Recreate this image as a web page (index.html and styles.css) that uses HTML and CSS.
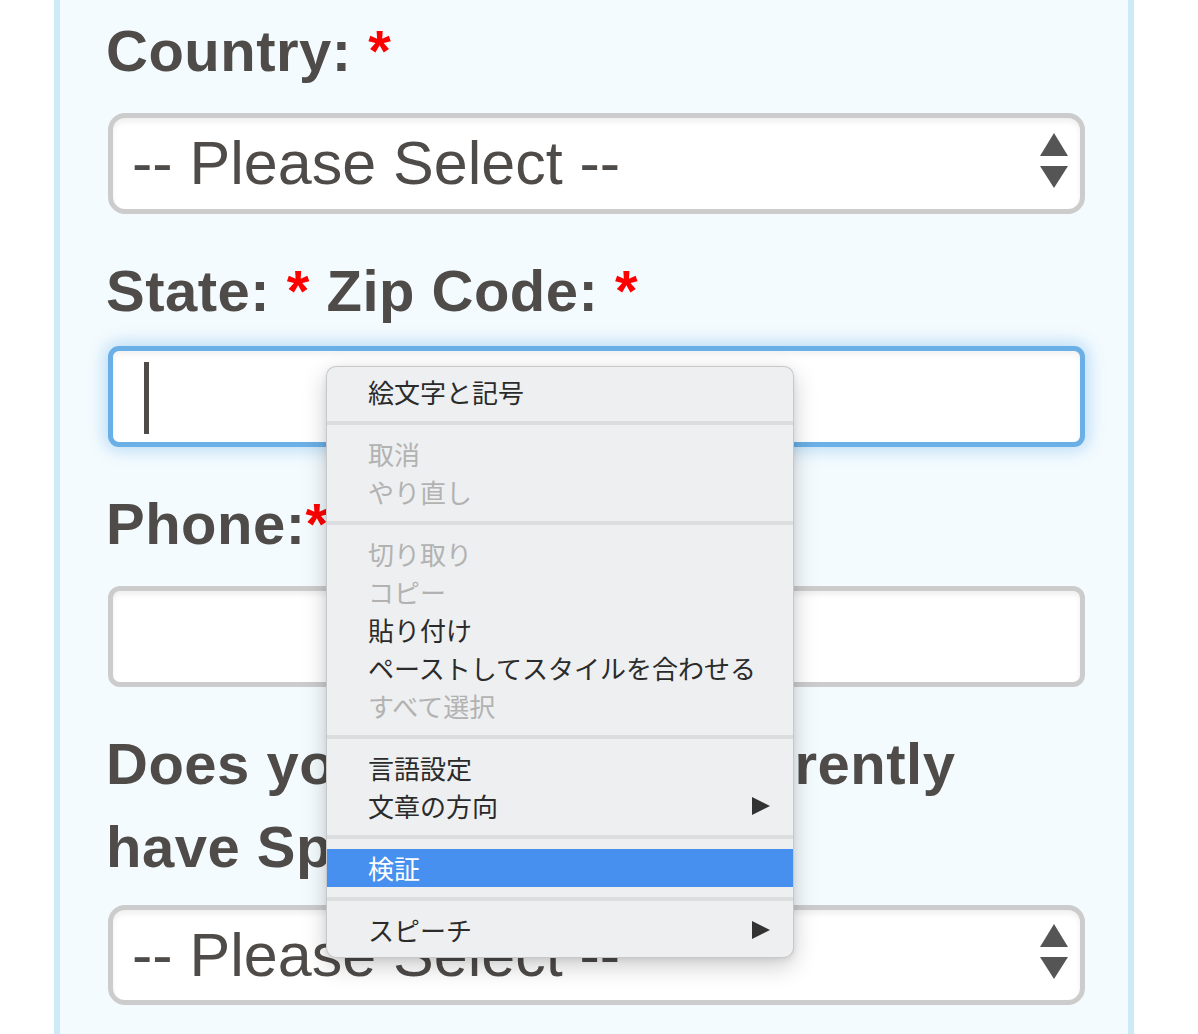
FILE: index.html
```html
<!DOCTYPE html>
<html lang="en">
<head>
<meta charset="utf-8">
<title>Service Form</title>
<link rel="stylesheet" href="styles.css">
</head>
<body>
<main class="panel">
  <form class="form">
    <div class="field">
      <div class="label">Country: <span class="req">*</span></div>
      <div class="select">
        <span class="select__value">-- Please Select --</span>
        <svg class="select__arrows" viewBox="0 0 28 55" width="28" height="55" aria-hidden="true">
          <polygon points="0,23 14,0 28,23" />
          <polygon points="0,33 28,33 14,55" />
        </svg>
      </div>
    </div>
    <div class="field">
      <div class="label label--close">State: <span class="req">*</span> Zip Code: <span class="req">*</span></div>
      <div class="input input--focus"><span class="caret"></span></div>
    </div>
    <div class="field">
      <div class="label">Phone:<span class="req">*</span></div>
      <div class="input"></div>
    </div>
    <div class="field">
      <div class="label label--mid">Does your residence currently have Spectrum?</div>
      <div class="select select--short">
        <span class="select__value">-- Please Select --</span>
        <svg class="select__arrows" viewBox="0 0 28 55" width="28" height="55" aria-hidden="true">
          <polygon points="0,23 14,0 28,23" />
          <polygon points="0,33 28,33 14,55" />
        </svg>
      </div>
    </div>
  </form>
</main>

<div class="menu" role="menu">
  <div class="menu__item">絵文字と記号</div>
  <div class="menu__sep"></div>
  <div class="menu__item menu__item--off">取消</div>
  <div class="menu__item menu__item--off">やり直し</div>
  <div class="menu__sep"></div>
  <div class="menu__item menu__item--off">切り取り</div>
  <div class="menu__item menu__item--off">コピー</div>
  <div class="menu__item">貼り付け</div>
  <div class="menu__item">ペーストしてスタイルを合わせる</div>
  <div class="menu__item menu__item--off">すべて選択</div>
  <div class="menu__sep"></div>
  <div class="menu__item">言語設定</div>
  <div class="menu__item menu__item--sub">文章の方向
    <svg class="menu__arrow" viewBox="0 0 18 18" width="18" height="18" aria-hidden="true"><polygon points="0,0 18,9 0,18" /></svg>
  </div>
  <div class="menu__sep"></div>
  <div class="menu__item menu__item--active">検証</div>
  <div class="menu__sep"></div>
  <div class="menu__item menu__item--sub">スピーチ
    <svg class="menu__arrow" viewBox="0 0 18 18" width="18" height="18" aria-hidden="true"><polygon points="0,0 18,9 0,18" /></svg>
  </div>
</div>
</body>
</html>
```

FILE: styles.css
```css
* {
  box-sizing: border-box;
}

html, body {
  margin: 0;
  padding: 0;
  background: #ffffff;
}

body {
  position: relative;
  height: 1034px;
  overflow: hidden;
  font-family: "Liberation Sans", Arial, Helvetica, sans-serif;
  color: #4e4b49;
}

.panel {
  margin-left: 54px;
  width: 1080px;
  min-height: 1034px;
  background: #f4fbfe;
  border-left: 6px solid #cdeaf7;
  border-right: 6px solid #cdeaf7;
  padding: 9.4px 43px 0 46px;
}

.form {
  display: flex;
  flex-direction: column;
}

.field {
  display: flex;
  flex-direction: column;
  margin-bottom: 35.4px;
}

.label {
  font-size: 58px;
  font-weight: bold;
  line-height: 83px;
  letter-spacing: 0.5px;
  margin-bottom: 20.6px;
}

.label--close {
  margin-bottom: 13.6px;
}

.label--mid {
  margin-bottom: 16.6px;
}

.req {
  color: #ff0000;
}

.select {
  margin-left: 2px;
  width: 977px;
  height: 101px;
  background: #ffffff;
  border: 5px solid #cccccc;
  border-radius: 17px;
  box-shadow: inset 0 4px 5px rgba(0, 0, 0, 0.06);
  display: flex;
  align-items: center;
  justify-content: space-between;
  padding: 0 12px 0 19px;
}

.select--short {
  height: 100px;
}

.select__value {
  font-size: 61px;
  color: #4e4b49;
  white-space: nowrap;
}

.select__arrows {
  fill: #555555;
  margin-bottom: 6px;
  flex: none;
}

.input {
  margin-left: 2px;
  width: 977px;
  height: 101px;
  background: #ffffff;
  border: 5px solid #cccccc;
  border-radius: 12px;
  box-shadow: inset 0 4px 5px rgba(0, 0, 0, 0.06);
  display: flex;
  align-items: center;
  padding-left: 31px;
}

.input--focus {
  border-color: #6aafe6;
  border-radius: 11px;
  box-shadow: 0 0 16px 4px rgba(120, 185, 240, 0.45), inset 0 4px 5px rgba(0, 0, 0, 0.05);
}

.caret {
  display: block;
  width: 5px;
  height: 72px;
  background: #4e4b49;
  margin-top: 4px;
}

.menu {
  position: absolute;
  left: 326px;
  top: 366px;
  width: 468px;
  background: #eeeff0;
  border: 1px solid rgba(0, 0, 0, 0.16);
  border-radius: 10px;
  box-shadow: 0 8px 24px rgba(0, 0, 0, 0.2), 0 2px 6px rgba(0, 0, 0, 0.08);
  padding: 6px 0 8px;
  font-family: "Noto Sans CJK JP", "Noto Sans", sans-serif;
  font-size: 26px;
  color: #2b2b2b;
}

.menu__item {
  height: 38px;
  line-height: 38px;
  padding: 0 23px 0 41px;
  display: flex;
  align-items: center;
  justify-content: space-between;
  white-space: nowrap;
}

.menu__item--off {
  color: #b2b2b2;
}

.menu__item--active {
  background: #4790ef;
  color: #ffffff;
}

.menu__arrow {
  fill: #333333;
  flex: none;
}

.menu__sep {
  height: 4px;
  background: #dcddde;
  margin: 10px 0;
}
```
